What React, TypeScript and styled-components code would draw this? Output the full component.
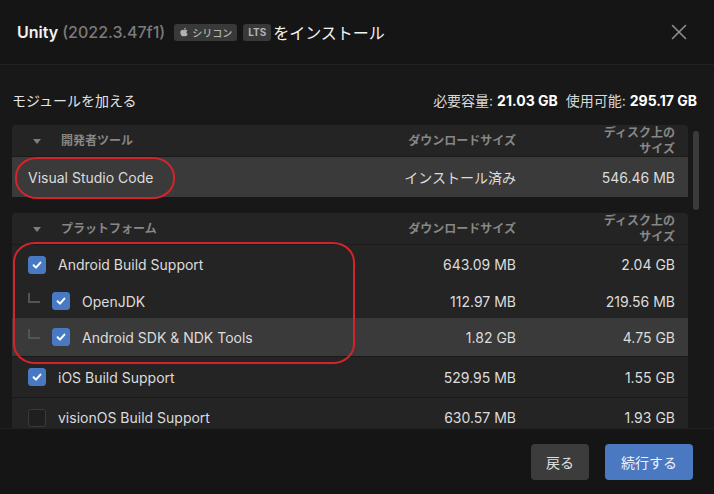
import { ReactNode } from 'react';
import styled, { createGlobalStyle } from 'styled-components';
import { X } from 'lucide-react';
import { FaApple } from 'react-icons/fa';

interface ModuleRow {
    name: string;
    download: string;
    disk: string;
    checked?: boolean;
    child?: boolean;
    active?: boolean;
    height: number;
}

const platforms: ModuleRow[] = [
    { name: 'Android Build Support', download: '643.09 MB', disk: '2.04 GB', checked: true, height: 39 },
    { name: 'OpenJDK', download: '112.97 MB', disk: '219.56 MB', checked: true, child: true, height: 34 },
    { name: 'Android SDK & NDK Tools', download: '1.82 GB', disk: '4.75 GB', checked: true, child: true, active: true, height: 38 },
    { name: 'iOS Build Support', download: '529.95 MB', disk: '1.55 GB', checked: true, height: 41 },
    { name: 'visionOS Build Support', download: '630.57 MB', disk: '1.93 GB', height: 40 },
];

const GlobalStyle = createGlobalStyle`
    body {
        margin: 0;
        background: #181818;
        font-family: Inter, "Noto Sans CJK JP", sans-serif;
        color: #dedede;
    }
`;

function Check({ on }: { on?: boolean }): ReactNode {
    return (
        <CheckBox $on={on}>
            {on && (
                <svg width="12" height="12" viewBox="0 0 12 12">
                    <path d="M2.6 6.3 L5 8.6 L9.4 3.6" fill="none" stroke="#fff" strokeWidth="2" strokeLinecap="round" strokeLinejoin="round" />
                </svg>
            )}
        </CheckBox>
    );
}

function GroupHeader({ title }: { title: string }): ReactNode {
    return (
        <HeadRow>
            <HeadName>
                <Caret />
                {title}
            </HeadName>
            <HeadCell>ダウンロードサイズ</HeadCell>
            <HeadCell>
                <DiskHead>ディスク上のサイズ</DiskHead>
            </HeadCell>
        </HeadRow>
    );
}

function App(): ReactNode {
    return (
        <Page>
            <GlobalStyle />
            <Header>
                <Title>
                    Unity <Version>(2022.3.47f1)</Version>
                    <Badge>
                        <FaApple size={10} />
                        シリコン
                    </Badge>
                    <Badge $bold>LTS</Badge>
                    <TitleTail>をインストール</TitleTail>
                </Title>
                <CloseButton>
                    <X size={26} strokeWidth={1.5} />
                </CloseButton>
            </Header>

            <Content>
                <StatsRow>
                    <span>モジュールを加える</span>
                    <Stats>
                        必要容量: <b>21.03 GB</b>
                        <Spacer />
                        使用可能: <b>295.17 GB</b>
                    </Stats>
                </StatsRow>
                <ListArea>
                    <List>
                        <Group>
                            <GroupHeader title="開発者ツール" />
                            <Row $active $h={40}>
                                <Name>Visual Studio Code</Name>
                                <Cell>インストール済み</Cell>
                                <Cell>546.46 MB</Cell>
                            </Row>
                        </Group>
                        <Group>
                            <GroupHeader title="プラットフォーム" />
                            {platforms.map((m, i) => (
                                <Row key={m.name} $active={m.active} $h={m.height} $divider={i > 0 && !m.child}>
                                    <Name>
                                        {m.child && <Branch />}
                                        <Check on={m.checked} />
                                        {m.name}
                                    </Name>
                                    <Cell>{m.download}</Cell>
                                    <Cell>{m.disk}</Cell>
                                </Row>
                            ))}
                        </Group>
                    </List>
                    <Track>
                        <Thumb />
                    </Track>
                </ListArea>
            </Content>

            <Footer>
                <Button>戻る</Button>
                <Button $primary>続行する</Button>
            </Footer>

            <Mark style={{ left: 15, top: 157, width: 160, height: 42 }} />
            <Mark style={{ left: 13, top: 242, width: 342, height: 122 }} />
        </Page>
    );
}

const Page = styled.div`
    position: relative;
    display: flex;
    flex-direction: column;
    width: 714px;
    height: 494px;
    overflow: hidden;
`;

const Header = styled.div`
    display: flex;
    align-items: center;
    justify-content: space-between;
    height: 64px;
    padding: 0 22px 0 17px;
    background: #151515;
    border-bottom: 1px solid #222;
`;

const Title = styled.div`
    display: flex;
    align-items: center;
    font-size: 16px;
    font-weight: 600;
    color: #f2f2f2;
    white-space: pre;
`;

const Version = styled.span`
    color: #7b7b7b;
    font-weight: 500;
    margin-right: 9px;
`;

const Badge = styled.span<{ $bold?: boolean }>`
    display: inline-flex;
    align-items: center;
    gap: 3px;
    height: 17px;
    padding: 0 5px;
    margin-right: 6px;
    border-radius: 3px;
    background: #393939;
    color: #b3b3b3;
    font-size: 10px;
    font-weight: ${(p) => (p.$bold ? 700 : 500)};
`;

const TitleTail = styled.span`
    font-weight: 400;
    margin-left: -4px;
`;

const CloseButton = styled.div`
    display: flex;
    color: #8f8f8f;
`;

const Content = styled.div`
    flex: 1;
    min-height: 0;
    overflow: hidden;
    padding: 25px 15px 0 12px;
`;

const StatsRow = styled.div`
    display: flex;
    align-items: center;
    justify-content: space-between;
    height: 20px;
    margin-bottom: 15px;
    padding-right: 2px;
    font-size: 14px;
    color: #e4e4e4;
`;

const Stats = styled.span`
    color: #d8d8d8;
    b {
        color: #fff;
        font-weight: 700;
    }
`;

const Spacer = styled.span`
    display: inline-block;
    width: 8px;
`;

const ListArea = styled.div`
    display: flex;
    gap: 5px;
`;

const List = styled.div`
    flex: 1;
    display: flex;
    flex-direction: column;
    gap: 16px;
`;

const Track = styled.div`
    width: 6px;
    padding-top: 6px;
`;

const Thumb = styled.div`
    height: 79px;
    border-radius: 3px;
    background: #3b3b3b;
`;

const Group = styled.div`
    background: #242424;
    border-radius: 4px 4px 0 0;
`;

const grid = `
    display: grid;
    grid-template-columns: 1fr 130px 159px;
    align-items: center;
    box-sizing: border-box;
    padding: 0 13px 0 16px;
`;

const HeadRow = styled.div`
    ${grid}
    height: 32px;
    border-bottom: 1px solid #1b1b1b;
    font-size: 12px;
    line-height: 16px;
    font-weight: 700;
    color: #878787;
`;

const HeadName = styled.div`
    display: flex;
    align-items: center;
`;

const Caret = styled.span`
    width: 0;
    height: 0;
    margin: 0 20px 0 5px;
    border-left: 4px solid transparent;
    border-right: 4px solid transparent;
    border-top: 5px solid #7d7d7d;
`;

const HeadCell = styled.div`
    text-align: right;
`;

const DiskHead = styled.span`
    display: inline-block;
    width: 75px;
`;

const Row = styled.div<{ $active?: boolean; $h: number; $divider?: boolean }>`
    ${grid}
    height: ${(p) => p.$h}px;
    border-top: ${(p) => (p.$divider ? '1px solid #1a1a1a' : 'none')};
    background: ${(p) => (p.$active ? '#3a3a3a' : 'transparent')};
    font-size: 14px;
    color: #dcdcdc;
`;

const Name = styled.div`
    display: flex;
    align-items: center;
    gap: 12px;
`;

const Cell = styled.div`
    text-align: right;
`;

const Branch = styled.span`
    width: 10px;
    height: 8px;
    margin: -6px 0 0 0;
    border-left: 2px solid #545454;
    border-bottom: 2px solid #545454;
`;

const CheckBox = styled.span<{ $on?: boolean }>`
    display: flex;
    align-items: center;
    justify-content: center;
    box-sizing: border-box;
    width: 18px;
    height: 18px;
    border-radius: 3px;
    background: ${(p) => (p.$on ? '#4a79c4' : '#1f1f1f')};
    border: 1px solid ${(p) => (p.$on ? '#4a79c4' : '#3a3a3a')};
`;

const Footer = styled.div`
    display: flex;
    align-items: center;
    justify-content: flex-end;
    gap: 16px;
    height: 65px;
    padding-right: 21px;
    background: #151515;
    border-top: 1px solid #222;
`;

const Button = styled.button<{ $primary?: boolean }>`
    height: 36px;
    padding: 0 ${(p) => (p.$primary ? 16 : 15)}px;
    border: none;
    border-radius: 4px;
    background: ${(p) => (p.$primary ? '#4a78c1' : '#3c3c3c')};
    color: ${(p) => (p.$primary ? '#eef3fb' : '#e0e0e0')};
    font-family: Inter, "Noto Sans CJK JP", sans-serif;
    font-size: 14px;
`;

const Mark = styled.div`
    position: absolute;
    box-sizing: border-box;
    border: 2px solid #d3242c;
    border-radius: 22px / 20px;
    pointer-events: none;
`;

export default App;
